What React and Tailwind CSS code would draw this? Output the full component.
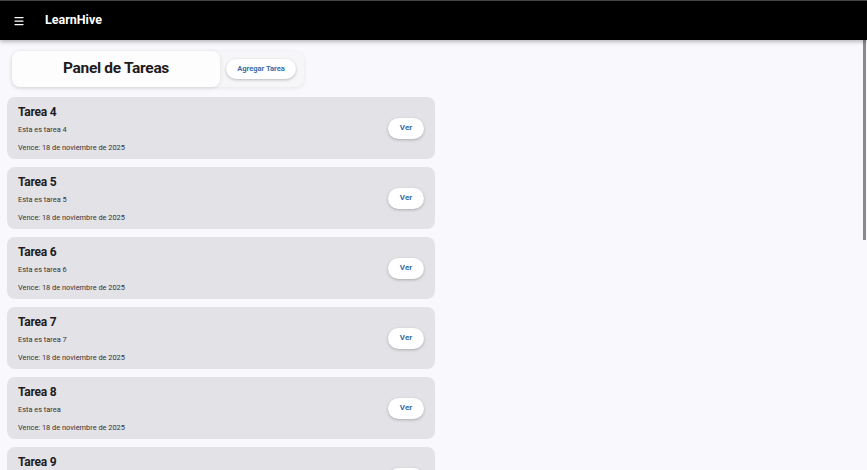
import { Menu } from 'lucide-react'

const tasks = [
  { id: 4, title: 'Tarea 4', description: 'Esta es tarea 4', due: '18 de noviembre de 2025' },
  { id: 5, title: 'Tarea 5', description: 'Esta es tarea 5', due: '18 de noviembre de 2025' },
  { id: 6, title: 'Tarea 6', description: 'Esta es tarea 6', due: '18 de noviembre de 2025' },
  { id: 7, title: 'Tarea 7', description: 'Esta es tarea 7', due: '18 de noviembre de 2025' },
  { id: 8, title: 'Tarea 8', description: 'Esta es tarea', due: '18 de noviembre de 2025' },
  { id: 9, title: 'Tarea 9', description: 'Esta es tarea 9', due: '18 de noviembre de 2025' },
]

function TaskCard({ task }) {
  return (
    <div className="flex h-[62px] w-[428px] shrink-0 items-center justify-between rounded-lg bg-[#e3e2e7] pl-[11px] pr-[11px]">
      <div className="flex flex-col">
        <h3 className="text-[12px] font-bold leading-[16px] tracking-[-0.02em] text-[#1d1b20]">{task.title}</h3>
        <p className="mt-[5px] text-[7.4px] leading-[10px] text-[#333]">{task.description}</p>
        <p className="mt-[8px] text-[7.4px] leading-[10px] text-[#333]">Vence: {task.due}</p>
      </div>
      <button className="h-[21px] w-[36px] rounded-full bg-white text-[8px] font-bold text-[#3a6ea5] shadow-[0_1px_3px_rgba(0,0,0,0.25)]">
        Ver
      </button>
    </div>
  )
}

export default function App() {
  return (
    <div className="flex h-[470px] w-[867px] flex-col overflow-hidden bg-[#f8f8fd] font-['Roboto',sans-serif]">
      <header className="relative z-10 flex h-[40px] shrink-0 items-center border-t border-[#444] bg-black pl-[13px] shadow-[0_2px_4px_rgba(0,0,0,0.25)]">
        <Menu className="h-[12px] w-[12px] text-white" strokeWidth={2.5} />
        <span className="ml-[20px] text-[12.5px] font-bold text-white">LearnHive</span>
      </header>

      <div className="relative flex-1 overflow-hidden">
        <div className="flex flex-col gap-2 pl-[7px] pt-[11px]">
          <div className="ml-[5px] flex h-[36px] w-[292px] items-center rounded-lg bg-[#f6f6f9] shadow-[0_1px_4px_rgba(0,0,0,0.08)]">
            <div className="flex h-[36px] w-[208px] items-center justify-center rounded-lg bg-[#fdfdfe] shadow-[0_1px_4px_rgba(0,0,0,0.1)]">
              <h1 className="text-[15.5px] font-bold tracking-[-0.02em] text-[#1d1b20]">Panel de Tareas</h1>
            </div>
            <button className="ml-[6px] h-[20px] w-[70px] rounded-full bg-white text-[7.5px] font-bold text-[#3a6ea5] shadow-[0_1px_3px_rgba(0,0,0,0.25)]">
              Agregar Tarea
            </button>
          </div>
          <div className="mt-[2px] flex flex-col gap-2">
            {tasks.map((task) => (
              <TaskCard key={task.id} task={task} />
            ))}
          </div>
        </div>
        <div className="absolute right-[1px] top-0 h-[200px] w-[3px] bg-[#8a8a8a]" />
      </div>
    </div>
  )
}
